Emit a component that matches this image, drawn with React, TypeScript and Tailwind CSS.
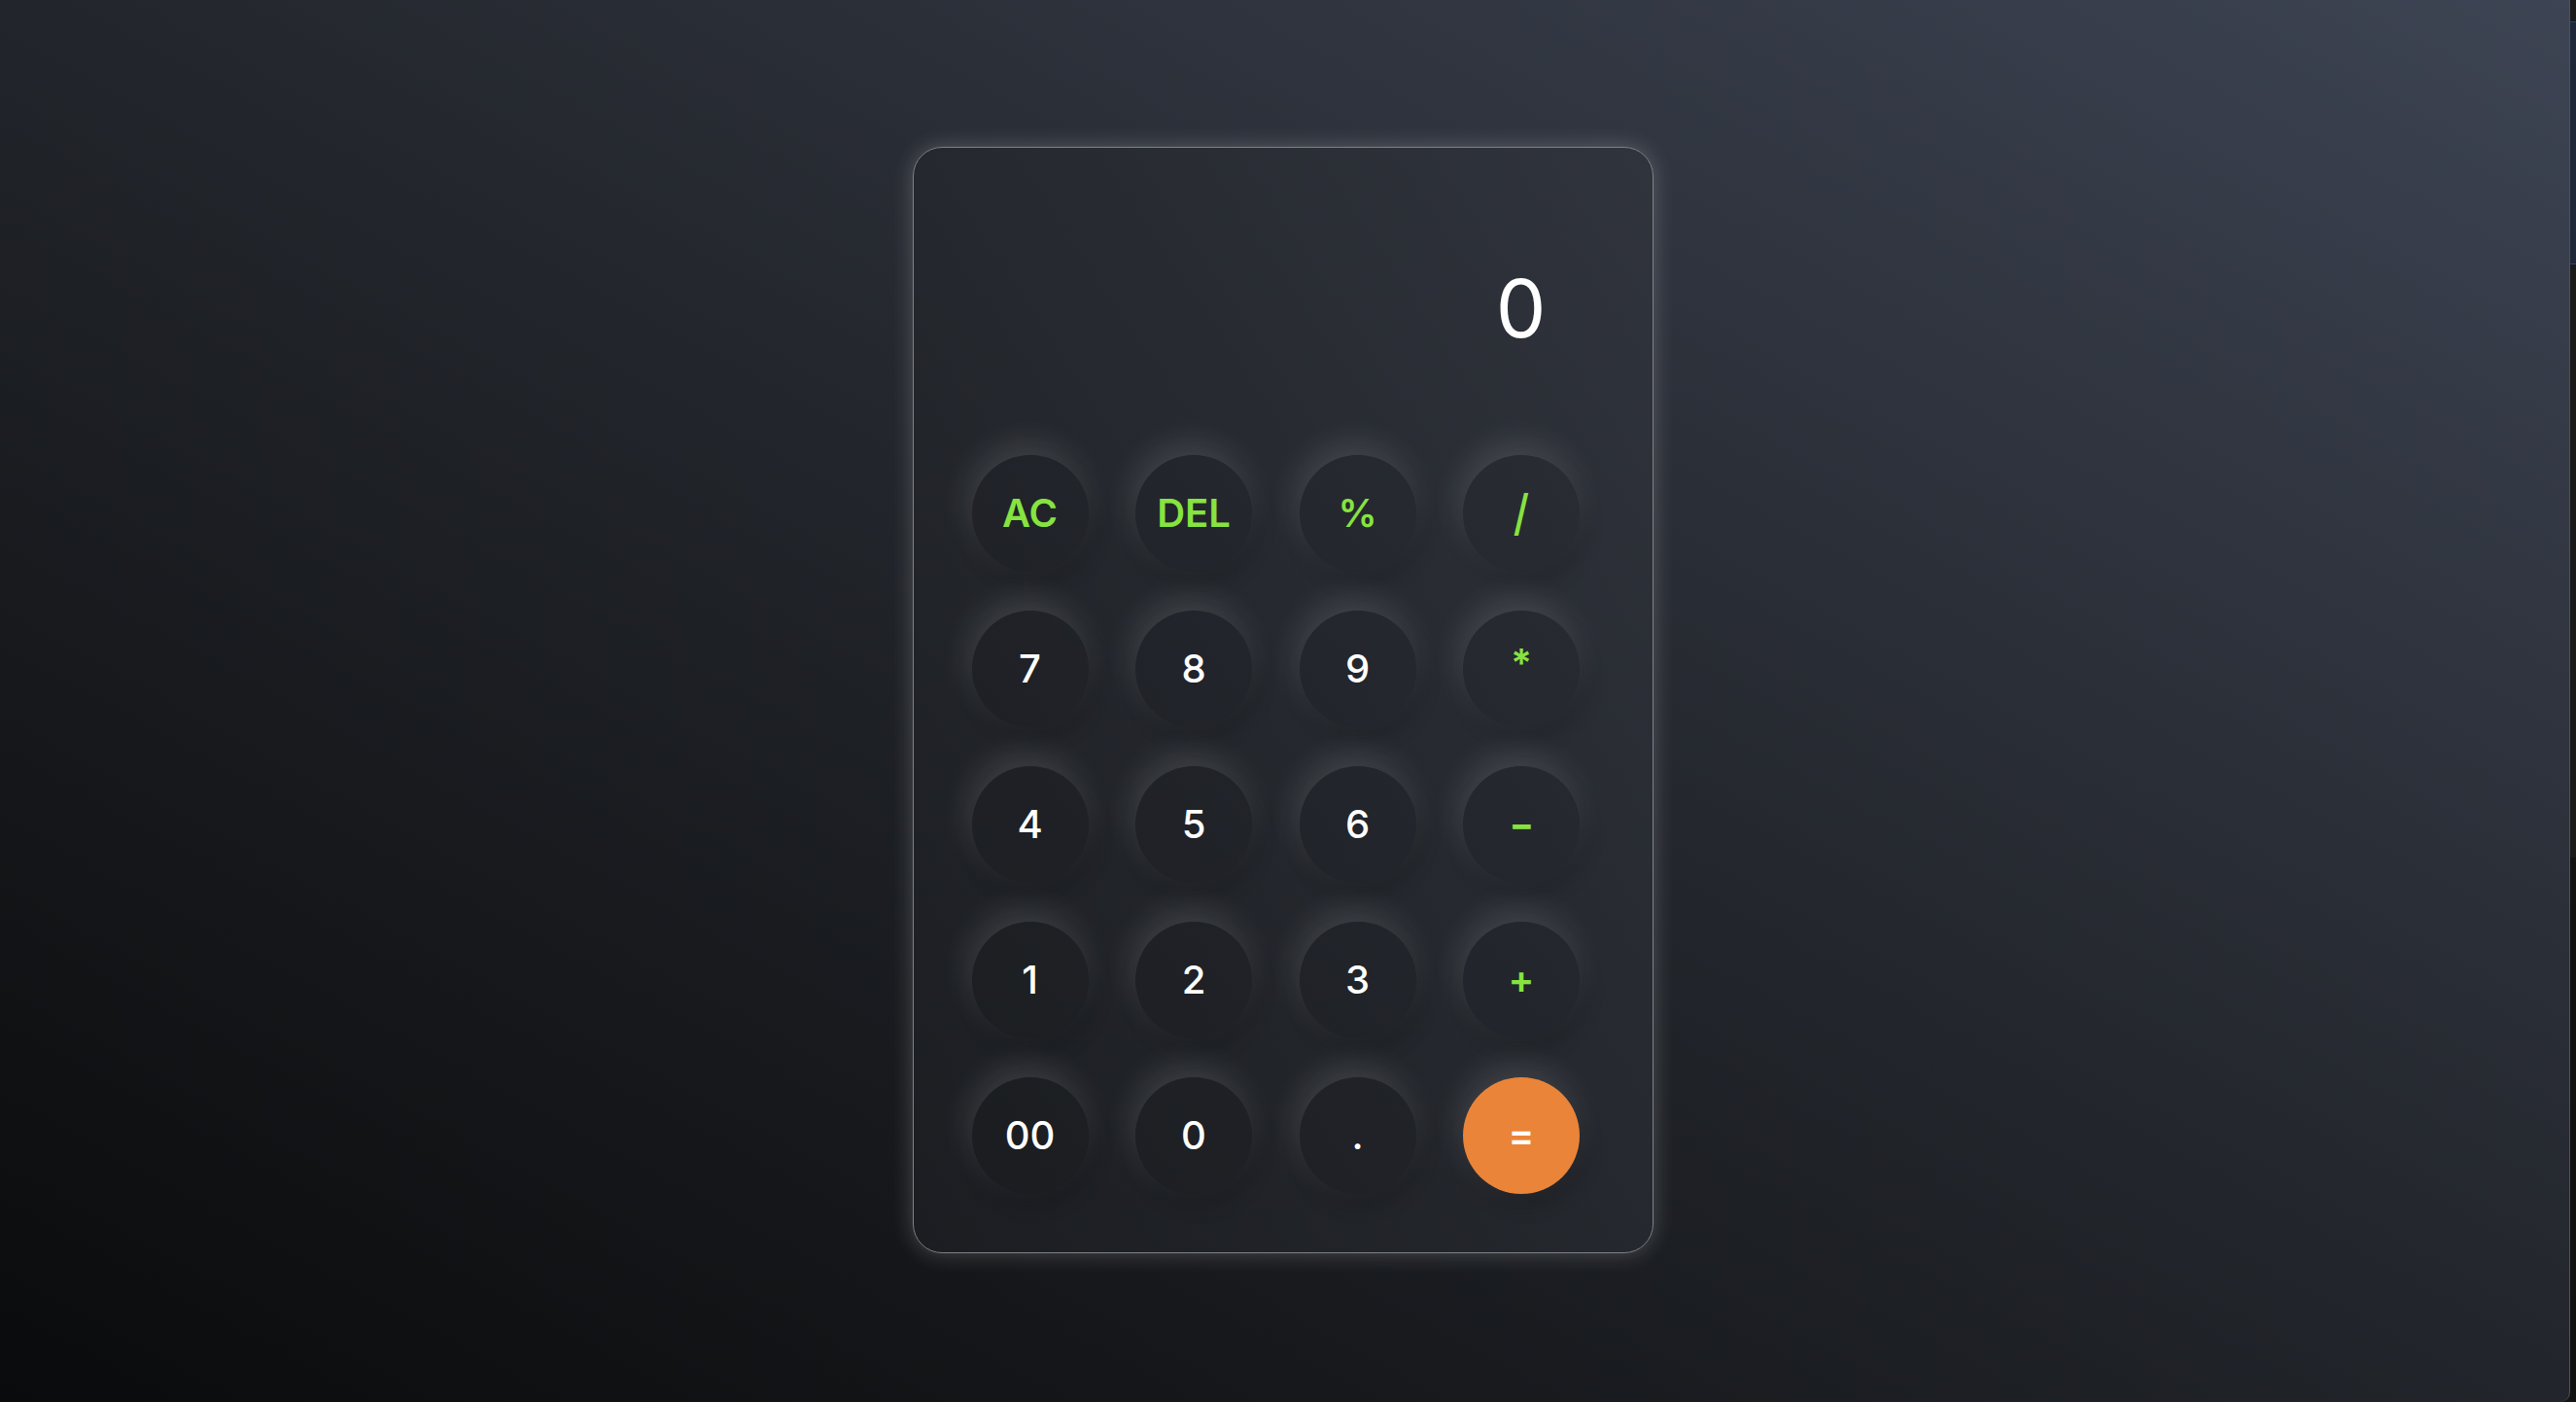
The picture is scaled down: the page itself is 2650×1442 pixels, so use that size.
import React from "react";

const keys: { label: string; kind: "op" | "num" | "eq" }[] = [
  { label: "AC", kind: "op" },
  { label: "DEL", kind: "op" },
  { label: "%", kind: "op" },
  { label: "/", kind: "op" },
  { label: "7", kind: "num" },
  { label: "8", kind: "num" },
  { label: "9", kind: "num" },
  { label: "*", kind: "op" },
  { label: "4", kind: "num" },
  { label: "5", kind: "num" },
  { label: "6", kind: "num" },
  { label: "-", kind: "op" },
  { label: "1", kind: "num" },
  { label: "2", kind: "num" },
  { label: "3", kind: "num" },
  { label: "+", kind: "op" },
  { label: "00", kind: "num" },
  { label: "0", kind: "num" },
  { label: ".", kind: "num" },
  { label: "=", kind: "eq" },
];

function Key({ label, kind }: { label: string; kind: "op" | "num" | "eq" }) {
  const base =
    "flex h-[120px] w-[120px] items-center justify-center rounded-full text-[40px] leading-none shadow-[-4px_-12px_32px_rgba(255,255,255,0.13),4px_10px_22px_rgba(0,0,0,0.2)]";
  if (kind === "eq") {
    return <button className={`${base} bg-[#ea8439] font-semibold text-white`}>{label}</button>;
  }
  return (
    <button
      className={`${base} bg-[rgba(0,0,0,0.06)] ${
        kind === "op" ? "font-semibold text-[#87e340]" : "font-medium text-white"
      }`}
    >
      <span
        className={
          label === "*"
            ? "-translate-y-[6px]"
            : label === "/"
            ? "inline-block scale-y-[1.15] text-[44px] font-medium"
            : label === "-"
            ? "inline-block scale-x-[1.4] font-bold"
            : ""
        }
      >
        {label}
      </span>
    </button>
  );
}

export default function App() {
  return (
    <div
      className="flex h-[1442px] w-full overflow-hidden bg-[#151515]"
      style={{ fontFamily: "Inter, 'Noto Sans', sans-serif" }}
    >
      <main className="flex flex-1 items-center justify-center rounded-br-[10px] border-r border-[#4b5262] bg-linear-to-tr from-[#0a0b0c] via-[#22252b] to-[#3d4453]">
        <div className="mb-[2px] mr-[4px] flex w-[762px] flex-col rounded-[30px] border border-[#7e8186] bg-linear-to-tr from-[#1b1d21] via-[#25282e] to-[#30343d] px-[60px] pb-[60px] pt-[60px] shadow-[0_0_22px_rgba(255,255,255,0.22)]">
          <div className="flex h-[216px] w-[625px] items-center justify-end pr-[34px] pb-[4px]">
            <span className="text-[82px] font-normal leading-none text-white">0</span>
          </div>
          <div className="mt-[40px] grid w-[625px] grid-cols-[repeat(4,120px)] gap-x-[48.5px] gap-y-[40px]">
            {keys.map((k) => (
              <Key key={k.label} label={k.label} kind={k.kind} />
            ))}
          </div>
        </div>
      </main>
      <div className="flex w-[6px] flex-col">
        <div className="h-[22px] bg-[#1b1b1b]" />
        <div className="h-[250px] border-y border-[#2e4466] bg-[#1e2838]" />
        <div className="h-[610px] bg-[#1a1a1a]" />
        <div className="flex-1 bg-[#121212]" />
      </div>
    </div>
  );
}
